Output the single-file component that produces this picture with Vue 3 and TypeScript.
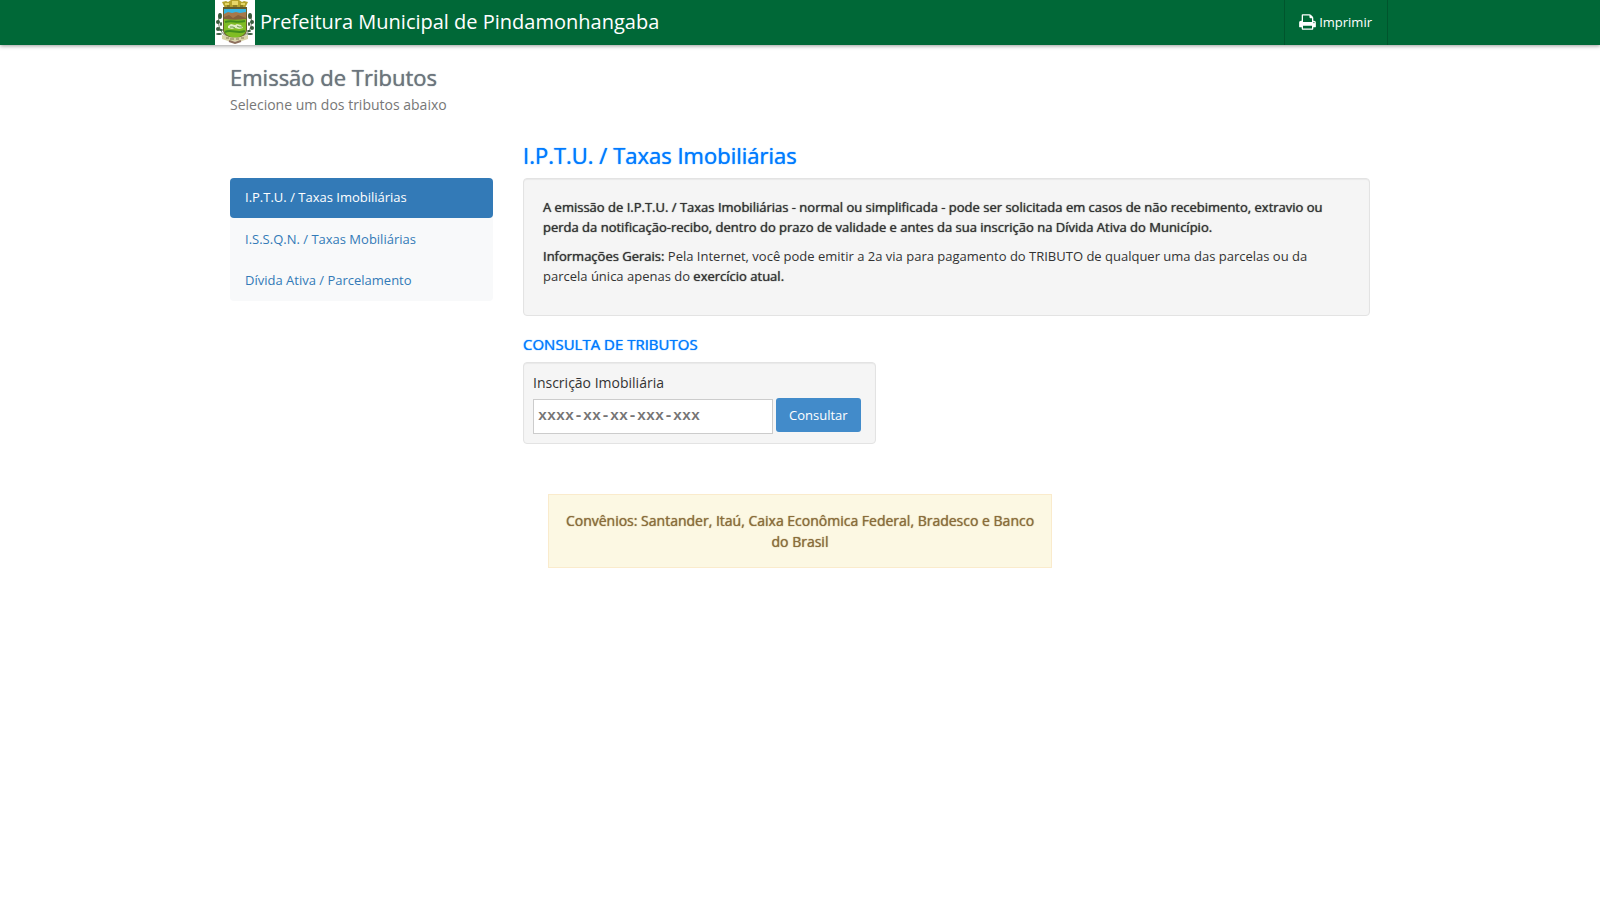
<script setup lang="ts">
import { ref } from 'vue'

const taxes = ['I.P.T.U. / Taxas Imobiliárias', 'I.S.S.Q.N. / Taxas Mobiliárias', 'Dívida Ativa / Parcelamento']
const active = ref(0)
const registration = ref('')

function printPage(): void {
  window.print()
}
</script>

<template>
  <header class="topbar">
    <div class="container topbar-inner">
      <a class="brand" href="#">
        <svg class="crest" viewBox="0 0 40 45" aria-hidden="true">
          <rect width="40" height="45" fill="#fff" />
          <path d="M5 14C2 22 3 31 13 38M35 14c3 8 2 17-8 24" fill="none" stroke="#75806a" stroke-width="1" />
          <g fill="#3a5a3c">
            <ellipse cx="5" cy="16" rx="2" ry="3" /><ellipse cx="3" cy="22" rx="2" ry="2" />
            <ellipse cx="6" cy="24" rx="1" ry="2" /><ellipse cx="3" cy="29" rx="2" ry="2" />
            <ellipse cx="6" cy="30" rx="2" ry="1" /><ellipse cx="4" cy="34" rx="3" ry="1" />
            <ellipse cx="35" cy="16" rx="2" ry="3" /><ellipse cx="37" cy="22" rx="2" ry="2" />
            <ellipse cx="34" cy="24" rx="1" ry="2" /><ellipse cx="37" cy="28" rx="2" ry="2" />
            <ellipse cx="34" cy="31" rx="2" ry="1" /><ellipse cx="35" cy="34" rx="3" ry="1" />
          </g>
          <path d="M7 2l4-1 2 1 3-2h8l3 2 2-1 4 1-3 6H10z" fill="#b6a32d" />
          <path d="M10 3h4v2h-4zM17 1h6v4h-6zM26 3h4v2h-4z" fill="#e7d768" />
          <path d="M12 6h3M18 6h4M25 6h3" stroke="#695d1c" stroke-width="1" />
          <path d="M8 7h24v23c0 5-6 8-12 10C14 38 8 35 8 30z" fill="#665d2b" />
          <path d="M9 9h22v6H9z" fill="#38b5e3" />
          <path d="M9 14l4-2 4 1 4-1 4 1 6-1v8H9z" fill="#a77849" />
          <path d="M9 17l5-2 4 3 5-3 8 3v3H9z" fill="#85613c" />
          <path d="M9 19c7 1 15 1 22 0v11c0 4-5 7-11 8-6-1-11-4-11-8z" fill="#80bd24" />
          <path d="M10 22c6-2 12 1 20-1M10 32c6-3 13 2 20-1" fill="none" stroke="#428d1c" stroke-width="2" />
          <path d="M13 26l3-2 4 1 2-1 4 1 2 3-4 1-4-1-3 1-4-1z" fill="#e2edc4" />
          <path d="M15 27h3l2 1M22 26l2 1h3" fill="none" stroke="#65964b" stroke-width="1" />
          <path d="M7 35l5 1c5 2 11 2 16 0l5-1v4l-6 2c-5 1-9 1-14 0l-6-2z" fill="#d8d4a7" />
          <path d="M11 38h3m1 1h4m2 0h3m2-1h3" stroke="#817d52" stroke-width="1" />
          <path d="M14 41l6 2 6-2" fill="none" stroke="#8e705e" stroke-width="2" />
        </svg>
        <span class="brand-name">Prefeitura Municipal de Pindamonhangaba</span>
      </a>
      <button class="print" type="button" @click="printPage">
        <svg viewBox="0 0 1664 1792" aria-hidden="true">
          <path fill="currentColor" fill-rule="evenodd" d="M384 1536h896v-256h-896v256zM384 896h896v-384h-160q-40 0-68-28t-28-68v-160h-640v640zM1536 960q0-26-19-45t-45-19-45 19-19 45 19 45 45 19 45-19 19-45zM1664 960v416q0 13-9.5 22.5t-22.5 9.5h-224v160q0 40-28 68t-68 28h-960q-40 0-68-28t-28-68v-160h-224q-13 0-22.5-9.5t-9.5-22.5v-416q0-79 56.5-135.5t135.5-56.5h64v-544q0-40 28-68t68-28h672q40 0 88 20t76 48l152 152q28 28 48 76t20 88v256h64q79 0 135.5 56.5t56.5 135.5z" />
        </svg>
        <span>Imprimir</span>
      </button>
    </div>
  </header>

  <div class="container page">
    <div class="intro">
      <h1>Emissão de Tributos</h1>
      <p>Selecione um dos tributos abaixo</p>
    </div>
    <div class="columns">
      <nav class="taxes" aria-label="Tributos">
        <a v-for="(tax, i) in taxes" :key="tax" href="#" :class="{ active: i === active }" @click.prevent="active = i">{{ tax }}</a>
      </nav>
      <main>
        <h2>I.P.T.U. / Taxas Imobiliárias</h2>
        <section class="well info">
          <p><strong>A emissão de I.P.T.U. / Taxas Imobiliárias - normal ou simplificada - pode ser solicitada em casos de não recebimento, extravio ou perda da notificação-recibo, dentro do prazo de validade e antes da sua inscrição na Dívida Ativa do Município.</strong></p>
          <p><strong>Informações Gerais:</strong> Pela Internet, você pode emitir a 2a via para pagamento do TRIBUTO de qualquer uma das parcelas ou da parcela única apenas do <strong>exercício atual.</strong></p>
        </section>
        <h3>CONSULTA DE TRIBUTOS</h3>
        <form class="well query" @submit.prevent>
          <label for="registration">Inscrição Imobiliária</label>
          <div class="field">
            <input id="registration" v-model="registration" type="text" placeholder="xxxx-xx-xx-xxx-xxx" />
            <button type="submit">Consultar</button>
          </div>
        </form>
      </main>
    </div>
    <p class="notice">Convênios: Santander, Itaú, Caixa Econômica Federal, Bradesco e Banco do Brasil</p>
  </div>
</template>

<style>
body {
  background: #fff;
  color: #333;
  font: 400 13px/1.5 "Open Sans", sans-serif;
}
</style>

<style scoped>
* { box-sizing: border-box; }
h1, h2, h3, p { margin: 0; }
a { text-decoration: none; }
h1, h2, h3, strong, .notice {
  font-weight: 400;
  text-shadow: 0 0 1px currentColor;
}
.container {
  width: 100%;
  max-width: 1170px;
  margin: 0 auto;
}
.topbar {
  background: #006837;
  box-shadow: 0 1px 4px rgba(0, 0, 0, 0.4);
}
.topbar-inner {
  display: flex;
  justify-content: space-between;
  height: 45px;
}
.brand {
  display: flex;
  align-items: center;
  gap: 5px;
  color: #fff;
  font-size: 20px;
}
.brand-name { padding-bottom: 2px; }
.crest { width: 40px; height: 45px; }
.print {
  display: flex;
  align-items: center;
  gap: 3px;
  margin-right: -3px;
  padding: 0 15px 2px 14px;
  border: 0;
  border-left: 1px solid #00552d;
  border-right: 1px solid #00552d;
  background: transparent;
  color: #fff;
  font: 400 13px/20px "Open Sans", sans-serif;
}
.print svg { width: 17px; height: 18px; }
.page { padding: 16px 15px; }
.intro { color: #777; font-size: 14px; }
h1 { color: #6c757d; font-size: 22px; line-height: 33px; }
.columns {
  display: grid;
  grid-template-columns: minmax(0, 263fr) minmax(0, 847fr);
  gap: 30px;
  margin-top: 24px;
}
.taxes {
  display: flex;
  flex-direction: column;
  gap: 2px;
  align-self: start;
  margin-top: 39px;
  border-radius: 4px;
  background: #f8f9fa;
}
.taxes a {
  padding: 10px 15px;
  border-radius: 4px;
  color: #337ab7;
}
.taxes .active { background: #337ab7; color: #fff; }
h2 { color: #007bff; font-size: 22px; line-height: 33px; }
.well {
  border: 1px solid #e3e3e3;
  border-radius: 4px;
  background: #f5f5f5;
  box-shadow: inset 0 1px 1px rgba(0, 0, 0, 0.05);
}
.info { margin-top: 6px; padding: 19px; }
.info p { margin-bottom: 10px; }
h3 {
  margin: 17px 0 7px;
  color: #007bff;
  font-size: 15px;
  line-height: 22px;
}
.query { width: fit-content; padding: 9px 14px 9px 9px; }
.query label { display: block; font-size: 14px; line-height: 21px; }
.field { display: flex; align-items: flex-start; gap: 3px; margin-top: 5px; }
.field input {
  width: 240px;
  height: 35px;
  margin-top: 1px;
  padding: 4px;
  border: 1px solid #ccc;
  border-radius: 0;
  background: #fff;
  color: #555;
  font: 700 15px/20px "Liberation Mono", monospace;
}
.field input::placeholder { color: #757575; opacity: 1; }
.field button {
  padding: 7px 13px;
  border: 0;
  border-radius: 3px;
  background: #428bca;
  color: #fff;
  font: 400 13px/20px "Open Sans", sans-serif;
}
.notice {
  width: 504px;
  max-width: 100%;
  margin: 50px auto 0;
  padding: 15px;
  border: 1px solid #faebcc;
  background: #fcf8e3;
  color: #8a6d3b;
  font-size: 14px;
  text-align: center;
}
</style>
